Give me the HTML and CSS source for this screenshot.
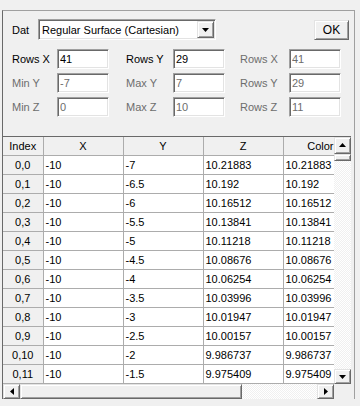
FILE: index.html
```html
<!DOCTYPE html>
<html lang="en">
<head>
  <meta charset="UTF-8" />
  <meta name="viewport" content="width=device-width, initial-scale=1.0" />
  <title>Surface Data</title>
  <link rel="stylesheet" href="styles.css">
</head>
<body>

<div class="frame">
  <!-- Parameters -->
  <div class="params">
    <div class="top-row">
      <span class="lbl">Dat</span>
      <div class="combo">
        <span class="combo-text">Regular Surface (Cartesian)</span>
        <span class="combo-btn">
          <svg width="7" height="4" viewBox="0 0 7 4"><polygon points="0,0 7,0 3.5,4" fill="#000"/></svg>
        </span>
      </div>
      <button class="ok-btn">OK</button>
    </div>

    <div class="fields">
      <span class="lbl">Rows X</span>
      <input class="edit" value="41">
      <span class="lbl col2">Rows Y</span>
      <input class="edit" value="29">
      <span class="lbl col3 off">Rows X</span>
      <input class="edit" value="41" disabled>

      <span class="lbl off">Min Y</span>
      <input class="edit" value="-7" disabled>
      <span class="lbl col2 off">Max Y</span>
      <input class="edit" value="7" disabled>
      <span class="lbl col3 off">Rows Y</span>
      <input class="edit" value="29" disabled>

      <span class="lbl off">Min Z</span>
      <input class="edit" value="0" disabled>
      <span class="lbl col2 off">Max Z</span>
      <input class="edit" value="10" disabled>
      <span class="lbl col3 off">Rows Z</span>
      <input class="edit" value="11" disabled>
    </div>
  </div>

  <!-- Data grid -->
  <div class="grid-box">
    <div class="grid-main">
      <div class="viewport">
        <table class="grid">
          <colgroup>
            <col class="c-index"><col class="c-data"><col class="c-data"><col class="c-data"><col class="c-data">
          </colgroup>
          <thead>
            <tr><th>Index</th><th>X</th><th>Y</th><th>Z</th><th class="h-clip">Color</th></tr>
          </thead>
          <tbody>
            <tr><th>0,0</th><td>-10</td><td>-7</td><td>10.21883</td><td>10.21883</td></tr>
            <tr><th>0,1</th><td>-10</td><td>-6.5</td><td>10.192</td><td>10.192</td></tr>
            <tr><th>0,2</th><td>-10</td><td>-6</td><td>10.16512</td><td>10.16512</td></tr>
            <tr><th>0,3</th><td>-10</td><td>-5.5</td><td>10.13841</td><td>10.13841</td></tr>
            <tr><th>0,4</th><td>-10</td><td>-5</td><td>10.11218</td><td>10.11218</td></tr>
            <tr><th>0,5</th><td>-10</td><td>-4.5</td><td>10.08676</td><td>10.08676</td></tr>
            <tr><th>0,6</th><td>-10</td><td>-4</td><td>10.06254</td><td>10.06254</td></tr>
            <tr><th>0,7</th><td>-10</td><td>-3.5</td><td>10.03996</td><td>10.03996</td></tr>
            <tr><th>0,8</th><td>-10</td><td>-3</td><td>10.01947</td><td>10.01947</td></tr>
            <tr><th>0,9</th><td>-10</td><td>-2.5</td><td>10.00157</td><td>10.00157</td></tr>
            <tr><th>0,10</th><td>-10</td><td>-2</td><td>9.986737</td><td>9.986737</td></tr>
            <tr><th>0,11</th><td>-10</td><td>-1.5</td><td>9.975409</td><td>9.975409</td></tr>
          </tbody>
        </table>
      </div>
      <div class="vscroll">
        <span class="sb-btn">
          <svg width="7" height="4" viewBox="0 0 7 4"><polygon points="0,4 7,4 3.5,0" fill="#000"/></svg>
        </span>
        <span class="v-thumb"></span>
        <span class="sb-track"></span>
        <span class="sb-btn">
          <svg width="7" height="4" viewBox="0 0 7 4"><polygon points="0,0 7,0 3.5,4" fill="#000"/></svg>
        </span>
      </div>
    </div>
    <div class="hscroll">
      <span class="sb-btn">
        <svg width="4" height="7" viewBox="0 0 4 7"><polygon points="4,0 4,7 0,3.5" fill="#000"/></svg>
      </span>
      <span class="h-thumb"></span>
      <span class="sb-track"></span>
      <span class="sb-btn">
        <svg width="4" height="7" viewBox="0 0 4 7"><polygon points="0,0 0,7 4,3.5" fill="#000"/></svg>
      </span>
      <span class="corner"></span>
    </div>
  </div>
</div>

</body>
</html>
```

FILE: styles.css
```css
body {
  font-family: "Liberation Sans", Arial, sans-serif;
  font-size: 11px;
  background-color: #f0f0f0;
  margin: 0;
  padding: 0;
  color: #000;
}

.frame {
  margin: 10px 5px 0 2px;
  height: 388px;
  border-top: 1px solid #a0a0a0;
  border-left: 1px solid #696969;
  border-right: 1px solid #a0a0a0;
  display: flex;
  flex-direction: column;
}

.params {
  height: 126px;
  padding: 8px 0 0 9px;
  box-sizing: border-box;
}

.top-row {
  display: flex;
  align-items: center;
  height: 21px;
}

.top-row .lbl {
  width: 26px;
}

.lbl.off {
  color: #6d6d6d;
}

/* sunken 3D edge */
.combo,
.edit {
  border: 1px solid;
  border-color: #a0a0a0 #fff #fff #a0a0a0;
  box-shadow: inset 1px 1px #696969, inset -1px -1px #e3e3e3;
  background: #fff;
  box-sizing: border-box;
}

.combo {
  width: 178px;
  height: 21px;
  display: flex;
  align-items: center;
  padding: 0 1px 0 3px;
}

.combo-text {
  flex: 1;
}

/* raised 3D edge */
.combo-btn,
.sb-btn,
.ok-btn,
.v-thumb,
.h-thumb {
  border: 1px solid;
  border-color: #e3e3e3 #696969 #696969 #e3e3e3;
  box-shadow: inset 1px 1px #fff, inset -1px -1px #a0a0a0;
  background: #f0f0f0;
  box-sizing: border-box;
}

.combo-btn {
  width: 17px;
  height: 17px;
  display: flex;
  align-items: center;
  justify-content: center;
}

.ok-btn {
  margin-left: auto;
  margin-right: 5px;
  width: 35px;
  height: 20px;
  font: inherit;
  font-size: 12px;
  padding: 0;
  color: #000;
}

.fields {
  margin-top: 9px;
  display: grid;
  grid-template-columns: 45px 52px 64px 52px 64px 52px;
  grid-auto-rows: 20px;
  row-gap: 4px;
  align-items: center;
}

.lbl.col2 {
  padding-left: 17px;
}

.lbl.col3 {
  padding-left: 15px;
}

.edit {
  width: 52px;
  height: 20px;
  font: inherit;
  padding: 0 2px;
  color: #000;
  outline: none;
}

.edit:disabled {
  color: #6d6d6d;
  background: #fff;
}

.grid-box {
  flex: 1;
  margin-right: 3px;
  border-top: 1px solid #696969;
  display: flex;
  flex-direction: column;
}

.grid-main {
  flex: 1;
  display: flex;
  min-height: 0;
}

.viewport {
  flex: 1;
  overflow: hidden;
  background: #fff;
}

.grid {
  border-collapse: collapse;
  table-layout: fixed;
  width: 360px;
}

.c-index {
  width: 40px;
}

.c-data {
  width: 80px;
}

.grid th,
.grid td {
  height: 19px;
  padding: 0 2px;
  border-right: 1px solid #acacac;
  border-bottom: 1px solid #acacac;
  white-space: nowrap;
  overflow: hidden;
  font-weight: normal;
  box-sizing: border-box;
}

.grid th {
  background: #f0f0f0;
  text-align: center;
}

.grid th.h-clip {
  text-align: right;
  padding-right: 29px;
}

.grid td {
  text-align: left;
}

.vscroll {
  width: 17px;
  display: flex;
  flex-direction: column;
}

.sb-btn {
  width: 17px;
  height: 17px;
  display: flex;
  align-items: center;
  justify-content: center;
  flex-shrink: 0;
}

.vscroll .sb-btn:last-child {
  height: 15px;
}

.v-thumb {
  height: 7px;
  flex-shrink: 0;
}

.sb-track {
  flex: 1;
  background-color: #fff;
  background-image: conic-gradient(#fff 25%, #f0f0f0 0 50%, #fff 0 75%, #f0f0f0 0);
  background-size: 2px 2px;
}

.hscroll {
  height: 15px;
  display: flex;
}

.hscroll .sb-btn {
  height: 15px;
}

.h-thumb {
  width: 222px;
}

.corner {
  width: 17px;
  background: #f0f0f0;
}
```
